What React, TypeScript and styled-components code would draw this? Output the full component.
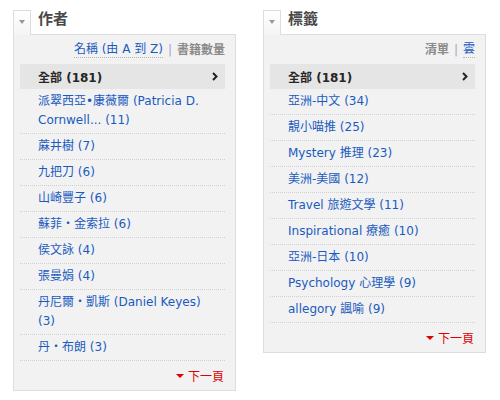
import React from 'react';
import styled, { createGlobalStyle } from 'styled-components';

const GlobalStyle = createGlobalStyle`
	body {
		margin: 0;
		background: #ffffff;
		font-family: 'DejaVu Sans', 'Noto Sans CJK TC', sans-serif;
	}
`;

const Page = styled.div`
	display: flex;
	align-items: flex-start;
	gap: 27px;
	padding: 10px 13px;
`;

const Panel = styled.section`
	width: 223px;
`;

const Header = styled.div`
	display: flex;
	align-items: flex-start;
	height: 24px;
`;

const Tab = styled.div`
	box-sizing: border-box;
	width: 18px;
	height: 25px;
	margin-bottom: -1px;
	border: 1px solid #dddddd;
	border-bottom: none;
	background: linear-gradient(#ffffff, #f4f4f4);
	display: flex;
	justify-content: center;
	padding-top: 9px;
	position: relative;
	z-index: 1;

	&::after {
		content: '';
		width: 0;
		height: 0;
		border-left: 3.5px solid transparent;
		border-right: 3.5px solid transparent;
		border-top: 4px solid #999999;
	}
`;

const Title = styled.h2`
	margin: 0 0 0 7px;
	font-size: 15px;
	line-height: 17px;
	padding-top: 1px;
	font-weight: bold;
	color: #484848;
`;

const Body = styled.div`
	border: 1px solid #dddddd;
	background: #f2f2f2;
	padding: 0 10px 0 6px;
`;

const SortRow = styled.div`
	height: 29px;
	display: flex;
	justify-content: flex-end;
	align-items: center;
	font-size: 12px;
	padding-top: 1px;
	box-sizing: border-box;
`;

const SortLink = styled.span<{ $active?: boolean }>`
	color: ${(p) => (p.$active ? '#8a8a8a' : '#1a5bbf')};
	font-weight: ${(p) => (p.$active ? 'bold' : 'normal')};
	border-bottom: ${(p) => (p.$active ? 'none' : '1px dotted #b5b5b5')};
	line-height: 15px;
`;

const Divider = styled.span`
	color: #9aaac0;
	margin: 0 5px;
	font-size: 12px;
`;

const AllRow = styled.div`
	height: 25px;
	background: #e5e5e5;
	display: flex;
	align-items: center;
	justify-content: space-between;
	padding: 0 7px 0 18px;
	font-size: 12px;
	font-weight: bold;
	color: #262626;
`;

const List = styled.ul`
	list-style: none;
	margin: 0;
	padding: 0;
`;

const Item = styled.li`
	padding: 3px 6px 3px 18px;
	line-height: 19px;
	font-size: 12px;
	color: #1a5bbf;
	border-bottom: 1px dotted #cfcfcf;
`;

const Footer = styled.div`
	height: 29px;
	display: flex;
	justify-content: flex-end;
	align-items: center;
	gap: 4px;
	font-size: 12px;
	color: #e00000;
	padding-right: 1px;

	&::before {
		content: '';
		width: 0;
		height: 0;
		margin-top: 1px;
		border-left: 4px solid transparent;
		border-right: 4px solid transparent;
		border-top: 4px solid #e00000;
	}
`;

const Chevron = () => (
	<svg width="6" height="9" viewBox="0 0 6 9">
		<polyline points="1,1 4.5,4.5 1,8" fill="none" stroke="#222" strokeWidth="2" />
	</svg>
);

type PanelProps = {
	title: string;
	sort: { label: string; active?: boolean }[];
	items: string[];
};

const FilterPanel: React.FC<PanelProps> = ({ title, sort, items }) => (
	<Panel>
		<Header>
			<Tab />
			<Title>{title}</Title>
		</Header>
		<Body>
			<SortRow>
				{sort.map((s, i) => (
					<React.Fragment key={s.label}>
						{i > 0 && <Divider>|</Divider>}
						<SortLink $active={s.active}>{s.label}</SortLink>
					</React.Fragment>
				))}
			</SortRow>
			<AllRow>
				<span>全部 (181)</span>
				<Chevron />
			</AllRow>
			<List>
				{items.map((item) => (
					<Item key={item}>{item}</Item>
				))}
			</List>
			<Footer>下一頁</Footer>
		</Body>
	</Panel>
);

const authors = [
	'派翠西亞•康薇爾 (Patricia D. Cornwell... (11)',
	'蔴井樹 (7)',
	'九把刀 (6)',
	'山崎豐子 (6)',
	'蘇菲・金索拉 (6)',
	'侯文詠 (4)',
	'張曼娟 (4)',
	'丹尼爾・凱斯 (Daniel Keyes) (3)',
	'丹・布朗 (3)',
];

const tags = [
	'亞洲-中文 (34)',
	'靚小喵推 (25)',
	'Mystery 推理 (23)',
	'美洲-美國 (12)',
	'Travel 旅遊文學 (11)',
	'Inspirational 療癒 (10)',
	'亞洲-日本 (10)',
	'Psychology 心理學 (9)',
	'allegory 諷喻 (9)',
];

export default function App() {
	return (
		<>
			<GlobalStyle />
			<Page>
				<FilterPanel
					title="作者"
					sort={[{ label: '名稱 (由 A 到 Z)' }, { label: '書籍數量', active: true }]}
					items={authors}
				/>
				<FilterPanel
					title="標籤"
					sort={[{ label: '清單', active: true }, { label: '雲' }]}
					items={tags}
				/>
			</Page>
		</>
	);
}
